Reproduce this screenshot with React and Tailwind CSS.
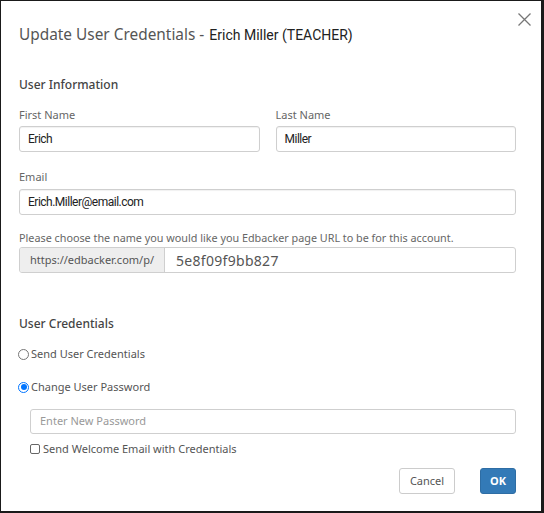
import React from "react";

export default function App() {
  const label = "text-[11px] leading-[14px] text-[#666]";
  const input =
    "w-full h-[26px] border border-[#cfcfcf] rounded-[3px] px-[8px] flex items-center text-[12px] tracking-[-0.5px] text-[#222] bg-white shadow-[inset_0_1px_1px_rgba(0,0,0,0.06)]";
  return (
    <div
      className="w-[544px] h-[513px] bg-white border-l border-t border-r-[3px] border-b-[2px] border-[#1a1a1a] pl-[18px] pr-[25px] pt-[11px] flex flex-col"
      style={{ fontFamily: "'Noto Sans', 'Open Sans', sans-serif" }}
    >
      {/* header */}
      <div className="flex items-start justify-between">
        <div className="mt-[13px] leading-[20px] flex items-baseline">
          <span className="text-[15.4px] text-[#555]">Update User Credentials -</span>
          <span
            className="ml-[5px] text-[14px] text-[#222]"
            style={{ fontFamily: "Roboto, 'Liberation Sans', sans-serif" }}
          >
            Erich Miller (TEACHER)
          </span>
        </div>
        <svg
          width="13"
          height="13"
          viewBox="0 0 13 13"
          className="-mr-[15px] mt-[1px]"
          stroke="#777"
          strokeWidth="1.3"
        >
          <path d="M0.5 0.5 L12.5 12.5 M12.5 0.5 L0.5 12.5" />
        </svg>
      </div>

      <div className="mt-[32px] text-[12px] leading-[16px] font-medium text-[#444]">User Information</div>

      <div className="mt-[15px] grid grid-cols-2 gap-x-[16px]">
        <div className="flex flex-col">
          <div className={label}>First Name</div>
          <div className={`mt-[4px] ${input}`} style={{ fontFamily: "Roboto, sans-serif" }}>Erich</div>
        </div>
        <div className="flex flex-col">
          <div className={label}>Last Name</div>
          <div className={`mt-[4px] ${input}`} style={{ fontFamily: "Roboto, sans-serif" }}>Miller</div>
        </div>
      </div>

      <div className={`mt-[18px] ${label}`}>Email</div>
      <div className={`mt-[5px] ${input}`} style={{ fontFamily: "Roboto, sans-serif" }}>
        Erich.Miller@email.com
      </div>

      <div className="mt-[16px] text-[10.8px] leading-[14px] text-[#666]">
        Please choose the name you would like you Edbacker page URL to be for this account.
      </div>
      <div className="mt-[2px] h-[26px] flex border border-[#cfcfcf] rounded-[3px] overflow-hidden">
        <div className="w-[145px] bg-[#eeeeee] border-r border-[#cfcfcf] flex items-center justify-center text-[11px] text-[#555]">
          https://edbacker.com/p/
        </div>
        <div className="flex-1 flex items-center pl-[11px] text-[14px] text-[#555] tracking-[0.3px]">
          5e8f09f9bb827
        </div>
      </div>

      <div className="mt-[43px] text-[12px] leading-[16px] font-medium text-[#444]">User Credentials</div>

      <label className="mt-[14px] h-[16px] flex items-center text-[11px] text-[#555]">
        <span className="w-[11px] h-[11px] rounded-full border border-[#767676] bg-white mr-[2px] -ml-[1px]" />
        Send User Credentials
      </label>

      <label className="mt-[17px] h-[16px] flex items-center text-[11px] text-[#555]">
        <span className="w-[11px] h-[11px] rounded-full bg-white mr-[2px] -ml-[1px] flex items-center justify-center border border-[#0075ff]">
          <span className="w-[6px] h-[6px] rounded-full bg-[#0075ff]" />
        </span>
        Change User Password
      </label>

      <div className="ml-[11px] mt-[14px] h-[25px] border border-[#cfcfcf] rounded-[3px] flex items-center px-[9px] text-[11px] text-[#999]">
        Enter New Password
      </div>

      <label className="ml-[11px] mt-[8px] h-[14px] flex items-center text-[11px] text-[#555]">
        <span className="w-[10px] h-[10px] border border-[#666] rounded-[2px] bg-white mr-[3px]" />
        Send Welcome Email with Credentials
      </label>

      <div className="mt-[12px] flex justify-end gap-[25px]">
        <button className="w-[56px] h-[26px] border border-[#ccc] rounded-[3px] bg-white text-[11px] text-[#555]">
          Cancel
        </button>
        <button className="w-[36px] h-[26px] rounded-[3px] bg-[#337ab7] border border-[#2e6da4] text-[11px] font-bold text-white">
          OK
        </button>
      </div>
    </div>
  );
}
